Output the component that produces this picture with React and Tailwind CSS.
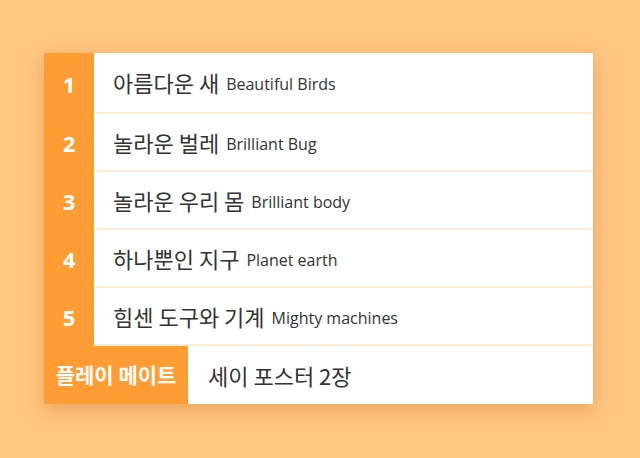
import React from "react";

const rows = [
  ["아름다운 새", "Beautiful Birds"],
  ["놀라운 벌레", "Brilliant Bug"],
  ["놀라운 우리 몸", "Brilliant body"],
  ["하나뿐인 지구", "Planet earth"],
  ["힘센 도구와 기계", "Mighty machines"],
];

const ko = { fontFamily: '"Noto Sans CJK KR", "Noto Sans", sans-serif' };
const en = { fontFamily: '"Open Sans", "Noto Sans", sans-serif' };

export default function App() {
  return (
    <div className="w-[640px] h-[458px] bg-[#ffc682] pt-[53px] pl-[44px]">
      <div className="w-[549px] bg-white shadow-[0_6px_18px_rgba(200,100,20,0.35)]">
        {rows.map(([k, e], i) => (
          <div
            key={i}
            className={`flex ${i === 0 ? "h-[61px]" : "h-[58px]"}`}
          >
            <div
              className="w-[50px] bg-[#ff9c33] flex items-center justify-center text-white text-[22px] font-bold"
              style={{ fontFamily: '"Noto Sans", sans-serif' }}
            >
              <span className={i === 0 ? "pt-[1px]" : ""}>{i + 1}</span>
            </div>
            <div className="flex-1 flex items-center pl-[19px] border-b-2 border-[#fdecd9] text-[#333333]">
              <span className="text-[22px] font-normal" style={ko}>{k}</span>
              <span className="text-[16px] ml-[7px] mt-[3px]" style={en}>{e}</span>
            </div>
          </div>
        ))}
        <div className="flex h-[58px]">
          <div
            className="w-[144px] bg-[#ff9c33] flex items-center justify-center text-white text-[21px] font-bold"
            style={ko}
          >
            플레이 메이트
          </div>
          <div className="flex-1 flex items-center pl-[20px] text-[#333333] text-[22px] font-normal" style={ko}>
            세이 포스터 2장
          </div>
        </div>
      </div>
    </div>
  );
}
